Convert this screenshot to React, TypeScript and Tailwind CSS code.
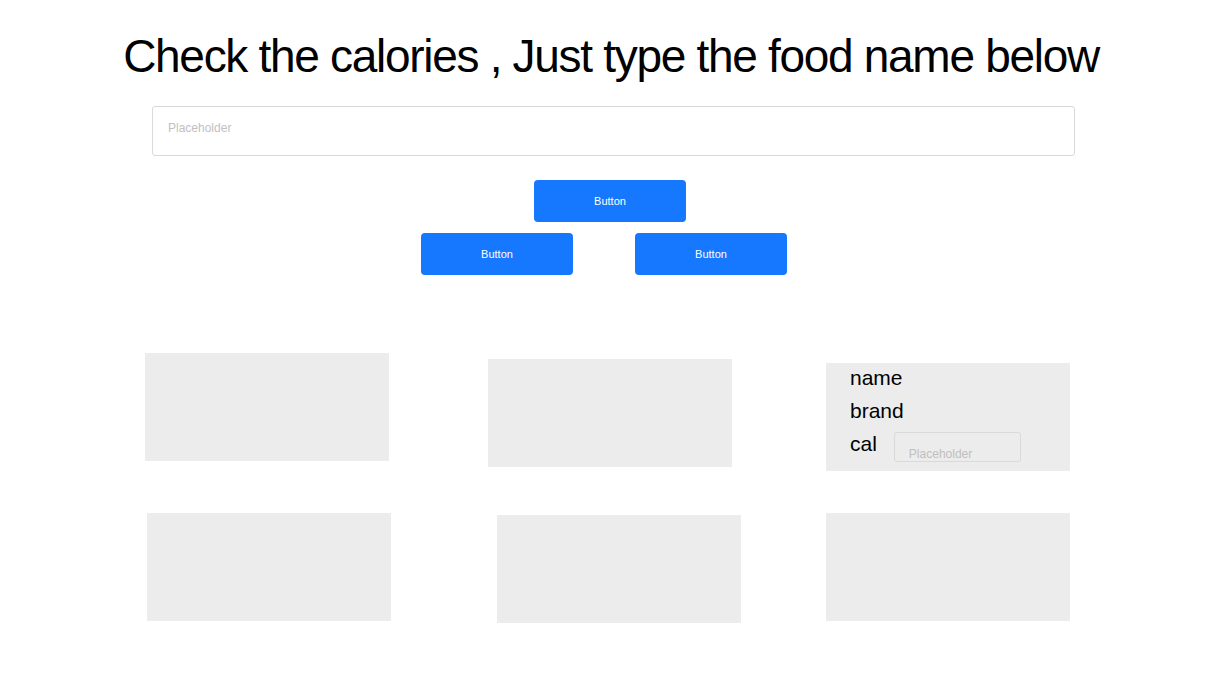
import React from 'react'

function Btn() {
  return (
    <button className="w-[152px] h-[42px] rounded-[4px] bg-[#1677ff] text-white text-[11px]">Button</button>
  )
}

function Card({ className = '', children }: { className?: string, children?: React.ReactNode }) {
  return <div className={`w-[244px] h-[108px] bg-[#ececec] shrink-0 ${className}`}>{children}</div>
}

export default function App() {
  return (
    <div className="w-[1222px] h-[674px] bg-white text-black font-['Liberation_Sans',Arial,sans-serif] overflow-hidden">
      <h1 className="pt-[28px] text-center text-[46px] leading-[56px] tracking-[-1.3px]">Check the calories , Just type the food name below</h1>

      <input
        placeholder="Placeholder"
        className="block ml-[152px] mt-[22px] w-[923px] h-[50px] border border-[#d9d9d9] rounded-[3px] px-[15px] pb-[6px] text-[12px] outline-none placeholder:text-[#bfbfbf]"
      />

      <div className="mt-[24px] ml-[534px]"><Btn /></div>
      <div className="mt-[11px] ml-[421px] flex gap-[62px]"><Btn /><Btn /></div>

      <div className="mt-[78px] flex items-start">
        <Card className="ml-[145px]" />
        <Card className="ml-[99px] mt-[6px]" />
        <Card className="ml-[94px] mt-[10px]">
          <div className="pl-[24px] -mt-[2px] text-[21px] leading-[33px]">
            <div>name</div>
            <div>brand</div>
            <div className="flex items-start">
              <span>cal</span>
              <input
                placeholder="Placeholder"
                className="ml-[17px] mt-[5px] w-[127px] h-[30px] border border-[#d9d9d9] rounded-[3px] px-[14px] pt-[14px] text-[12px] leading-[14px] outline-none bg-transparent placeholder:text-[#bfbfbf]"
              />
            </div>
          </div>
        </Card>
      </div>

      <div className="mt-[42px] flex items-start">
        <Card className="ml-[147px]" />
        <Card className="ml-[106px] mt-[2px]" />
        <Card className="ml-[85px]" />
      </div>
    </div>
  )
}
